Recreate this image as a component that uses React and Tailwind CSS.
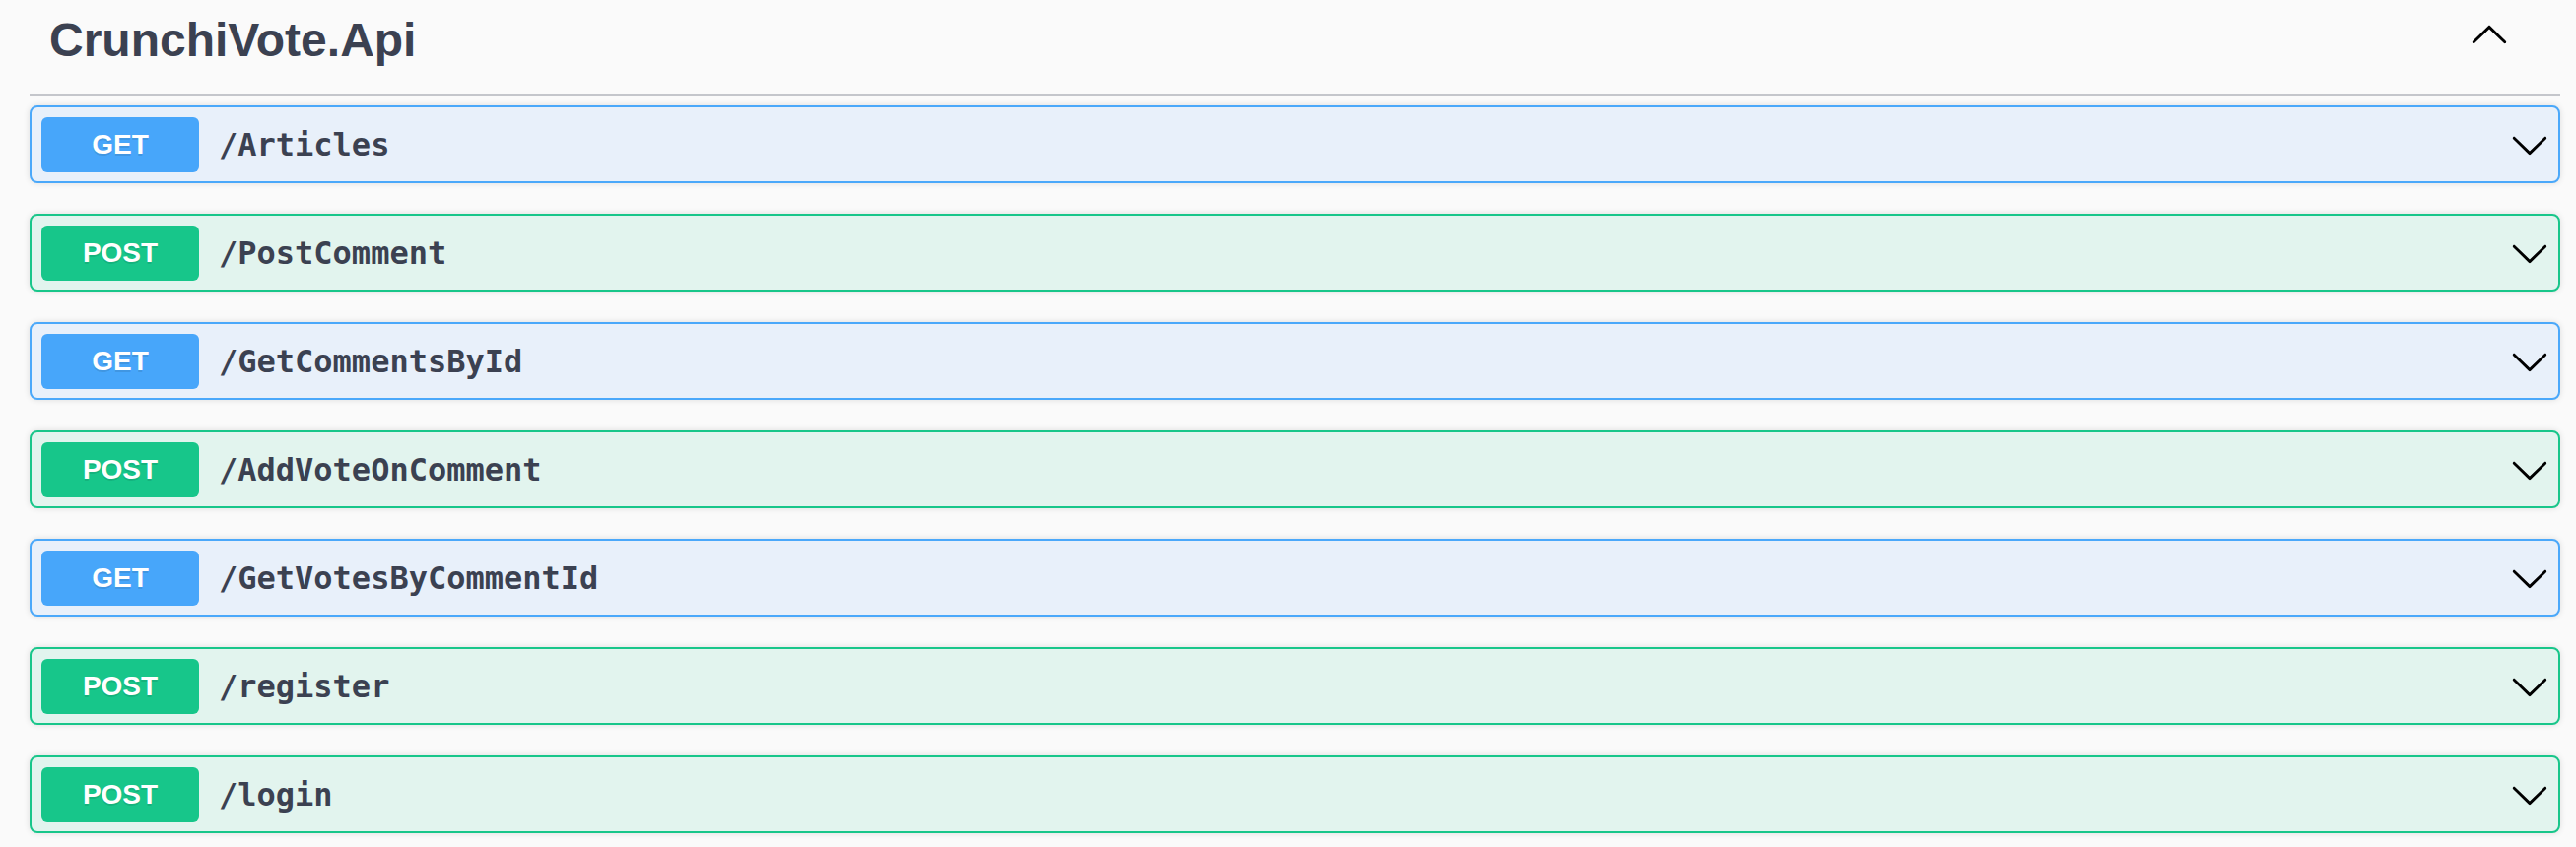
const ops = [
    { method: 'GET', path: '/Articles' },
    { method: 'POST', path: '/PostComment' },
    { method: 'GET', path: '/GetCommentsById' },
    { method: 'POST', path: '/AddVoteOnComment' },
    { method: 'GET', path: '/GetVotesByCommentId' },
    { method: 'POST', path: '/register' },
    { method: 'POST', path: '/login' },
];

const styles = {
    GET: {
        card: 'bg-[#e8f0fa] border-[#4aa8fa]',
        badge: 'bg-[#47a6fa]',
    },
    POST: {
        card: 'bg-[#e2f4ee] border-[#18c68a]',
        badge: 'bg-[#17c68a]',
    },
};

function Arrow({ up = false, className = '' }) {
    return (
        <svg viewBox="0 0 20 20" width="40" height="40" className={`${up ? 'rotate-180' : ''} ${className}`}>
            <path
                fill="#000"
                d="M17.418 6.109c.272-.268.709-.268.979 0s.271.701 0 .969l-7.908 7.83c-.27.268-.707.268-.979 0l-7.908-7.83c-.27-.268-.27-.701 0-.969.271-.268.709-.268.979 0L10 13.25l7.418-7.141z"
            />
        </svg>
    );
}

function OpBlock({ method, path }) {
    const s = styles[method];
    return (
        <div className={`h-[79px] flex items-center rounded-[8px] border-2 pl-[10px] pr-[9px] shadow-[0_0_6px_rgba(0,0,0,0.12)] ${s.card}`}>
            <div className={`w-[160px] h-[56px] rounded-[6px] flex items-center justify-center text-white text-[28px] font-bold font-['Liberation_Sans',Arial,sans-serif] [text-shadow:0_2px_0_rgba(0,0,0,0.1)] ${s.badge}`}>
                {method}
            </div>
            <span className="ml-[20px] text-[32px] font-bold text-[#3b4151] font-['DejaVu_Sans_Mono',monospace]">
                {path}
            </span>
            <div className="flex-1" />
            <Arrow />
        </div>
    );
}

export default function App() {
    return (
        <div className="min-h-screen bg-[#fafafa] pl-[30px] pr-[16px]">
            {/* Tag header */}
            <div className="flex items-start border-b-2 border-[#c4c6cb] pt-[5px] pb-[18px] pl-[20px] pr-[52px]">
                <h4 className="flex-1 leading-[72px] text-[48px] font-bold text-[#3b4151] font-['Liberation_Sans',Arial,sans-serif]">
                    CrunchiVote.Api
                </h4>
                <Arrow up className="mt-[11px]" />
            </div>

            {/* Operations */}
            <div className="flex flex-col gap-[31px] pt-[10px]">
                {ops.map((op) => (
                    <OpBlock key={op.path} {...op} />
                ))}
            </div>
        </div>
    );
}
